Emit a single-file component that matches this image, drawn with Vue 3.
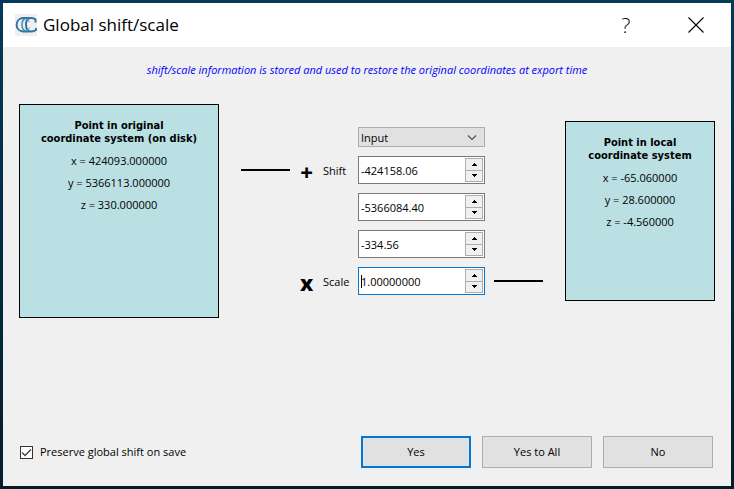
<script setup>
import { reactive, ref } from 'vue'

const original = [
  { axis: 'x', value: '424093.000000' },
  { axis: 'y', value: '5366113.000000' },
  { axis: 'z', value: '330.000000' },
]
const local = [
  { axis: 'x', value: '-65.060000' },
  { axis: 'y', value: '28.600000' },
  { axis: 'z', value: '-4.560000' },
]
const fields = reactive([
  { id: 'shift-x', name: 'Shift X', sign: '+', label: 'Shift', value: '-424158.06', digits: 2, lineBefore: true },
  { id: 'shift-y', name: 'Shift Y', value: '-5366084.40', digits: 2 },
  { id: 'shift-z', name: 'Shift Z', value: '-334.56', digits: 2 },
  { id: 'scale', name: 'Scale', sign: 'x', label: 'Scale', value: '1.00000000', digits: 8, lineAfter: true, active: true },
])
const source = ref('Input')
const preserve = ref(true)

function step(field, delta) {
  field.value = (Number(field.value) + delta).toFixed(field.digits)
}
</script>

<template>
  <div class="desktop">
    <div class="dialog" role="dialog" aria-labelledby="dialog-title">
      <header class="titlebar">
        <svg class="logo" viewBox="0 0 22 22" aria-hidden="true">
          <rect width="22" height="22" fill="#efefef" />
          <g fill="none">
            <path d="M14 4H8C-0.500 4.500 -0.500 17 8 17.500H14" stroke="#2a74a4" stroke-width="1.900" />
            <path d="M10.500 4.500C5.800 6.500 5.800 15 10.500 17" stroke="#4189b4" stroke-width="1.500" />
            <path d="M20.500 8.500V5.500C19 4 17.500 3.800 15.500 4C9.500 4.800 9.500 16.700 15.500 17.500C17.500 17.800 19 17.400 21 16V14" stroke="#2a74a4" stroke-width="1.900" />
            <path d="M12 4.500L14.500 8M12 17L14.500 13.500" stroke="#6aa5c8" stroke-width="1" />
          </g>
        </svg>
        <h1 id="dialog-title">Global shift/scale</h1>
        <button class="caption help" type="button" aria-label="Help">?</button>
        <button class="caption" type="button" aria-label="Close">
          <svg class="close" viewBox="0 0 16 16" aria-hidden="true">
            <path d="M0.500 0.500L15.500 15.500M15.500 0.500L0.500 15.500" fill="none" stroke="#000" stroke-width="1.100" />
          </svg>
        </button>
      </header>

      <p class="note">shift/scale information is stored and used to restore the original coordinates at export time</p>

      <main class="transform">
        <section class="point original">
          <h2>Point in original<br />coordinate system (on disk)</h2>
          <p v-for="c in original" :key="c.axis">{{ c.axis }} = {{ c.value }}</p>
        </section>

        <div class="form">
          <div class="combo">
            <select v-model="source" aria-label="Shift source">
              <option>Input</option>
            </select>
            <svg class="chevron" viewBox="0 0 10 6" aria-hidden="true">
              <path d="M1 0.500L5 4.500L9 0.500" fill="none" stroke="#555" stroke-width="1.200" />
            </svg>
          </div>
          <template v-for="f in fields" :key="f.id">
            <span class="line before" :class="{ drawn: f.lineBefore }"></span>
            <span class="sign">{{ f.sign }}</span>
            <label :for="f.id">{{ f.label }}</label>
            <div class="spin" :class="{ active: f.active }">
              <input :id="f.id" v-model="f.value" type="text" inputmode="decimal" :aria-label="f.name" />
              <div class="steppers">
                <button type="button" :aria-label="`Increase ${f.name}`" @click="step(f, 1)">
                  <svg viewBox="0 0 5 3" aria-hidden="true"><path d="M0 3V2H1V1H2V0H3V1H4V2H5V3Z" /></svg>
                </button>
                <button type="button" :aria-label="`Decrease ${f.name}`" @click="step(f, -1)">
                  <svg viewBox="0 0 5 3" aria-hidden="true"><path d="M0 0V1H1V2H2V3H3V2H4V1H5V0Z" /></svg>
                </button>
              </div>
            </div>
            <span class="line" :class="{ drawn: f.lineAfter }"></span>
          </template>
        </div>

        <section class="point local">
          <h2>Point in local<br />coordinate system</h2>
          <p v-for="c in local" :key="c.axis">{{ c.axis }} = {{ c.value }}</p>
        </section>
      </main>

      <footer class="actions">
        <label class="check">
          <span class="box">
            <input v-model="preserve" type="checkbox" />
            <svg v-if="preserve" viewBox="0 0 13 13" aria-hidden="true">
              <path d="M2 6.500L5 9.500L11 3.500" fill="none" stroke="#444" stroke-width="1.400" />
            </svg>
          </span>
          <span>Preserve global shift on save</span>
        </label>
        <button class="push default" type="button">Yes</button>
        <button class="push" type="button">Yes to All</button>
        <button class="push" type="button">No</button>
      </footer>
    </div>
  </div>
</template>

<style>
body {
  margin: 0;
}
</style>

<style scoped>
* {
  box-sizing: border-box;
}
.desktop {
  display: flex;
  min-height: 100vh;
  padding: 3px;
  background: linear-gradient(#043a58, #041d2b);
  font-family: "Open Sans", "Noto Sans", sans-serif;
  font-size: 11px;
  line-height: 14px;
  color: #000;
}
.dialog {
  display: flex;
  flex: 1;
  flex-direction: column;
  background: #f0f0f0;
}
h1,
h2,
p {
  margin: 0;
}
button,
input,
select {
  margin: 0;
  font: inherit;
  color: inherit;
}
.titlebar {
  display: flex;
  align-items: center;
  height: 44px;
  padding-left: 12px;
  background: #fff;
}
.logo {
  width: 22px;
  height: 22px;
  margin-right: 6px;
}
h1 {
  flex: 1;
  font-size: 17px;
  font-weight: 400;
  line-height: 24px;
}
.caption {
  display: grid;
  place-items: center;
  width: 70px;
  height: 44px;
  padding: 0;
  border: 0;
  background: none;
}
.help {
  font-size: 21px;
  font-weight: 300;
}
.close {
  width: 16px;
  height: 16px;
}
.note {
  margin-top: 16px;
  padding: 0 16px;
  font-style: italic;
  text-align: center;
  color: #00f;
}
.transform {
  display: flex;
  align-items: center;
  gap: 22px;
  margin: 27px 0 24px;
  padding: 0 16px;
}
.point {
  border: 1px solid #000;
  background: #bae0e3;
  text-align: center;
  padding-top: 14px;
}
.point h2 {
  margin-bottom: 9px;
  font-family: "DejaVu Sans Condensed", "DejaVu Sans", sans-serif;
  font-size: 11px;
  font-weight: 700;
  line-height: 13px;
}
.point p {
  margin-bottom: 8px;
}
.original {
  width: 200px;
  min-height: 214px;
}
.local {
  width: 150px;
  min-height: 180px;
}
.form {
  display: grid;
  flex: 1;
  grid-template-columns: 1fr 15px 26px 127px 1fr;
  gap: 9px;
  align-items: center;
}
.combo {
  position: relative;
  grid-column: 4 / 5;
}
select {
  display: block;
  width: 100%;
  height: 20px;
  padding: 2px 2px 0;
  appearance: none;
  border: 1px solid #adadad;
  border-radius: 0;
  background: #e1e1e1;
}
.chevron {
  position: absolute;
  top: 8px;
  right: 8px;
  width: 10px;
  height: 6px;
  pointer-events: none;
}
.before {
  grid-column: 1;
}
.line {
  height: 2px;
}
.drawn {
  background: #000;
}
.sign {
  padding-top: 2px;
  font-family: "Noto Sans", sans-serif;
  font-size: 22px;
  font-weight: 800;
  line-height: 26px;
  text-align: center;
}
.form label {
  padding-top: 2px;
  white-space: nowrap;
}
.spin {
  position: relative;
  display: flex;
  height: 28px;
  padding: 1px;
  border: 1px solid #7a7a7a;
  background: #fff;
}
.spin.active {
  border-color: #0078d7;
}
.spin.active::before {
  position: absolute;
  top: 7px;
  left: 2px;
  width: 1px;
  height: 13px;
  background: #000;
  content: "";
}
.spin input {
  flex: 1;
  min-width: 0;
  padding: 2px 1px 0;
  border: 0;
  outline: 0;
  background: none;
}
.steppers {
  display: grid;
  width: 18px;
  border: 1px solid #adadad;
  background: #adadad;
  gap: 1px;
}
.steppers button {
  display: grid;
  place-items: center;
  padding: 0;
  border: 0;
  background: #f0f0f0;
}
.steppers svg {
  width: 5px;
  height: 3px;
}
.actions {
  display: flex;
  align-items: center;
  gap: 11px;
  margin-top: auto;
  padding: 0 18px 18px 17px;
}
.check {
  display: flex;
  flex: 1;
  align-items: center;
  gap: 7px;
}
.box {
  position: relative;
  width: 13px;
  height: 13px;
}
.box input {
  display: block;
  width: 13px;
  height: 13px;
  appearance: none;
  border: 1px solid #333;
  background: #fff;
}
.box svg {
  position: absolute;
  inset: 0;
  pointer-events: none;
}
.push {
  width: 110px;
  height: 32px;
  padding: 0;
  border: 1px solid #adadad;
  background: #e1e1e1;
}
.push.default {
  border: 2px solid #0078d7;
}
</style>
